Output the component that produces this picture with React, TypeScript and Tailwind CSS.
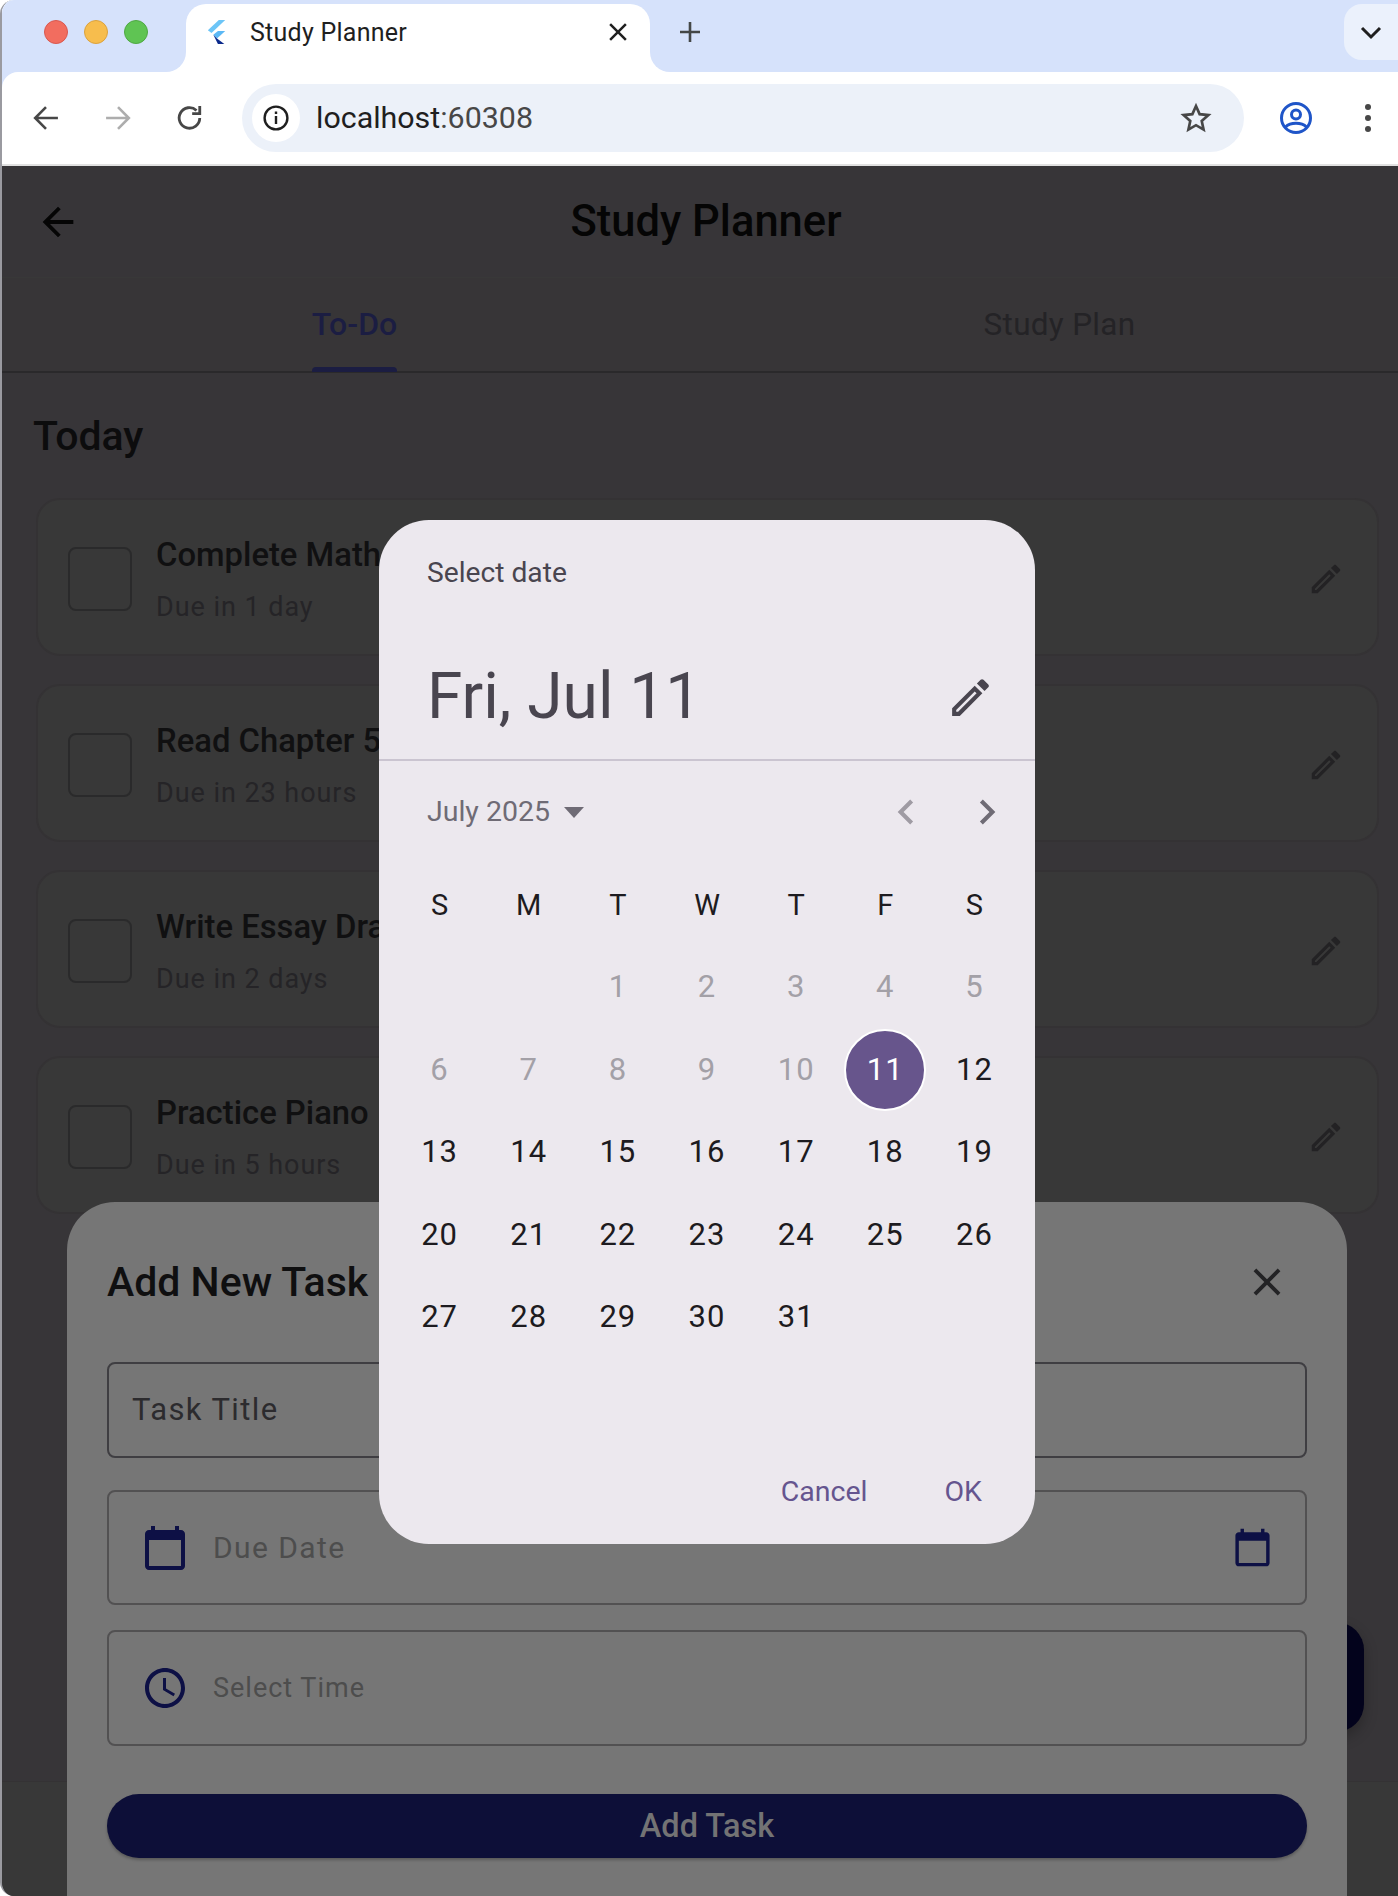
import React from 'react';

const PATHS = {
  back: 'M20 11H7.83l5.59-5.59L12 4l-8 8 8 8 1.41-1.41L7.83 13H20v-2z',
  edit: 'M14.06 9.02l.92.92L5.92 19H5v-.92l9.06-9.06M17.66 3c-.25 0-.51.1-.7.29l-1.83 1.83 3.75 3.75 1.83-1.83c.39-.39.39-1.02 0-1.41l-2.34-2.34c-.2-.2-.45-.29-.71-.29zm-3.6 3.19L3 17.25V21h3.75L17.81 9.94l-3.75-3.75z',
  close: 'M19 6.41L17.59 5 12 10.59 6.41 5 5 6.41 10.59 12 5 17.59 6.41 19 12 13.41 17.59 19 19 17.59 13.41 12z',
  calendar: 'M20 3h-1V1h-2v2H7V1H5v2H4c-1.1 0-2 .9-2 2v16c0 1.1.9 2 2 2h16c1.1 0 2-.9 2-2V5c0-1.1-.9-2-2-2zm0 18H4V8h16v13z',
  clock: 'M11.99 2C6.47 2 2 6.48 2 12s4.47 10 9.99 10C17.52 22 22 17.52 22 12S17.52 2 11.99 2zM12 20c-4.42 0-8-3.58-8-8s3.58-8 8-8 8 3.58 8 8-3.58 8-8 8zm.5-13H11v6l5.25 3.15.75-1.23-4.5-2.67z',
  prev: 'M15.41 7.41L14 6l-6 6 6 6 1.41-1.41L10.83 12z',
  next: 'M10 6L8.59 7.41 13.17 12l-4.58 4.59L10 18l6-6z',
};

const Icon = ({ d, className }: { d: string; className: string }) => (
  <svg viewBox="0 0 24 24" fill="currentColor" className={className}>
    <path d={d} />
  </svg>
);

const tasks = [
  { title: 'Complete Math', due: 'Due in 1 day' },
  { title: 'Read Chapter 5', due: 'Due in 23 hours' },
  { title: 'Write Essay Dra', due: 'Due in 2 days' },
  { title: 'Practice Piano', due: 'Due in 5 hours' },
];

const weekDays = ['S', 'M', 'T', 'W', 'T', 'F', 'S'];

const BrowserChrome = () => (
  <div className="bg-[#d6e2fb] font-['Roboto',sans-serif]">
    <div className="flex h-[72px] bg-white">
      <div className="flex w-[184px] items-center gap-[16px] rounded-br-[20px] bg-[#d6e2fb] pb-[8px] pl-[42px]">
        <span className="size-[24px] rounded-full border border-[#d9584f] bg-[#f26d5f]" />
        <span className="size-[24px] rounded-full border border-[#dba23e] bg-[#f7bd4d]" />
        <span className="size-[24px] rounded-full border border-[#4fa843] bg-[#5fc453]" />
      </div>
      <div className="bg-[#d6e2fb] pt-[4px]">
        <div className="flex h-[68px] w-[464px] items-center rounded-t-[20px] bg-white pb-[12px] pl-[20px]">
          <svg viewBox="0 0 24 28" className="h-[26px] w-[22px]">
            <polygon points="14,1 21,1 6,15 2,12" fill="#6cc5f7" />
            <polygon points="13,13 21,13 12,21 8,17" fill="#5bb8f5" />
            <polygon points="8,17 12,21 20,27 13,27" fill="#0b2a8c" />
          </svg>
          <span className="ml-[22px] text-[25px] leading-none tracking-[0.25px] text-[#1f1f1f]">Study Planner</span>
          <Icon d={PATHS.close} className="ml-auto mr-[17px] size-[30px] text-[#1f1f1f]" />
        </div>
      </div>
      <div className="flex flex-1 justify-between rounded-bl-[20px] bg-[#d6e2fb] pl-[28px]">
        <svg viewBox="0 0 24 24" className="mt-[20px] size-[24px] text-[#444746]" fill="none" stroke="currentColor" strokeWidth="2.6">
          <path d="M12 2v20M2 12h20" />
        </svg>
        <div className="mt-[4px] flex h-[56px] w-[54px] items-center justify-center rounded-l-[18px] bg-[#ebf1fc]">
          <svg viewBox="0 0 24 24" className="size-[24px] text-[#1f1f1f]" fill="none" stroke="currentColor" strokeWidth="3">
            <path d="M3 8l9 9 9-9" />
          </svg>
        </div>
      </div>
    </div>
    <div className="flex h-[92px] items-center rounded-tl-[16px] bg-white">
      <svg viewBox="0 0 24 24" className="ml-[31px] size-[26px] text-[#474747]" fill="none" stroke="currentColor" strokeWidth="2.4">
        <path d="M23 12H2M12 2L2 12l10 10" />
      </svg>
      <svg viewBox="0 0 24 24" className="ml-[46px] size-[26px] text-[#adadad]" fill="none" stroke="currentColor" strokeWidth="2.4">
        <path d="M1 12h21M12 2l10 10-10 10" />
      </svg>
      <svg viewBox="0 0 24 24" className="ml-[46px] size-[26px] text-[#474747]" fill="none" stroke="currentColor" strokeWidth="2.6">
        <path d="M21 12a9.5 9.5 0 1 1-3-7M21 1v7h-7" />
      </svg>
      <div className="ml-[39px] flex h-[68px] w-[1002px] items-center rounded-full bg-[#ecf1f9] pl-[10px] pr-[32px]">
        <div className="flex size-[48px] items-center justify-center rounded-full bg-white">
          <svg viewBox="0 0 26 26" className="size-[26px] text-[#1f1f1f]" fill="none" stroke="currentColor" strokeWidth="2.4">
            <circle cx="13" cy="13" r="11.4" />
            <path d="M13 11v8M13 6.5v2.4" />
          </svg>
        </div>
        <span className="ml-[16px] text-[30.4px] leading-none text-[#1f1f1f]">
          localhost<span className="text-[#474747]">:60308</span>
        </span>
        <svg viewBox="0 0 24 24" className="ml-auto size-[32px] text-[#474747]" fill="none" stroke="currentColor" strokeWidth="2">
          <path d="M12 3l2.7 6.1 6.6.7-5 4.4 1.4 6.5L12 17.4l-5.7 3.3 1.4-6.5-5-4.4 6.6-.7z" />
        </svg>
      </div>
      <svg viewBox="0 0 32 32" className="ml-[36px] size-[32px] text-[#1f55c8]" fill="none" stroke="currentColor" strokeWidth="3">
        <circle cx="16" cy="16" r="14.5" />
        <circle cx="16" cy="12.5" r="4.5" />
        <path d="M5.5 25c5-5 16-5 21 0" />
      </svg>
      <div className="ml-[53px] flex flex-col gap-[5px]">
        <span className="size-[6px] rounded-full bg-[#474747]" />
        <span className="size-[6px] rounded-full bg-[#474747]" />
        <span className="size-[6px] rounded-full bg-[#474747]" />
      </div>
    </div>
    <div className="h-[2px] bg-[#e1e1e1]" />
  </div>
);

const TaskCard = ({ title, due }: { title: string; due: string }) => (
  <div className="flex h-[158px] items-center rounded-[24px] border-2 border-[#343234] bg-[#383838] pl-[30px] pr-[32px]">
    <div className="mt-[4px] size-[64px] rounded-[8px] border-2 border-[#2a2a2b]" />
    <div className="ml-[24px] flex flex-col pt-[5px]">
      <span className="text-[32.8px] font-medium leading-[46px] text-[#101011]">{title}</span>
      <span className="mt-[9px] text-[27px] leading-[40px] tracking-[0.95px] text-[#252427]">{due}</span>
    </div>
    <Icon d={PATHS.edit} className="ml-auto mt-[4px] size-[38px] text-[#232224]" />
  </div>
);

const DatePicker = () => (
  <div className="absolute left-[377px] top-[354px] z-20 flex h-[1024px] w-[656px] flex-col rounded-[50px] bg-[#ece8ee]">
    <div className="mt-[38px] pl-[48px] text-[28.2px] leading-[30px] text-[#49454f]">Select date</div>
    <div className="mt-[59px] flex h-[100px] items-center pl-[48px] pr-[40px]">
      <span className="text-[64px] leading-none text-[#49454f]">Fri, Jul 11</span>
      <Icon d={PATHS.edit} className="ml-auto size-[49px] text-[#49454f]" />
    </div>
    <div className="mt-[12px] h-[2px] bg-[#cac4d0]" />
    <div className="mt-[21px] flex h-[60px] items-center pl-[48px] pr-[23px]">
      <span className="text-[28.5px] leading-none text-[#6f6b75]">July 2025</span>
      <svg viewBox="0 0 20 11" className="ml-[14px] h-[11px] w-[20px] text-[#6f6b75]" fill="currentColor">
        <path d="M0 0h20L10 11z" />
      </svg>
      <Icon d={PATHS.prev} className="ml-auto size-[50px] text-[#9f9ba3]" />
      <Icon d={PATHS.next} className="ml-[31px] size-[50px] text-[#6f6b75]" />
    </div>
    <div className="mt-[34px] grid h-[60px] grid-cols-7 px-[16px]">
      {weekDays.map((d, i) => (
        <div key={i} className="flex items-center justify-center text-[29px] text-[#1d1b20]">
          {d}
        </div>
      ))}
    </div>
    <div className="mt-[10px] grid auto-rows-[82.5px] grid-cols-7 px-[16px]">
      <div />
      <div />
      {Array.from({ length: 31 }, (_, i) => i + 1).map((n) => (
        <div key={n} className="flex items-center justify-center">
          {n === 11 ? (
            <div className="flex size-[82px] items-center justify-center rounded-full border-2 border-white bg-[#67558c] text-[31px] tracking-[1px] text-white">
              {n}
            </div>
          ) : (
            <span className={n < 11 ? 'text-[31px] tracking-[1px] text-[#a3a0a7]' : 'text-[31px] tracking-[1px] text-[#1d1b20]'}>
              {n}
            </span>
          )}
        </div>
      ))}
    </div>
    <div className="mb-[32px] mt-auto flex h-[40px] items-center justify-end gap-[77px] pr-[53px] text-[28.5px] leading-none text-[#65558f]">
      <span>Cancel</span>
      <span>OK</span>
    </div>
  </div>
);

const AddTaskSheet = () => (
  <div className="absolute bottom-0 left-[65px] right-[51px] top-[1036px] z-10 flex flex-col rounded-t-[48px] bg-[#767676] px-[40px]">
    <div className="mt-[50px] flex h-[60px] items-center justify-between">
      <span className="text-[41px] font-medium leading-none text-[#0f0f10]">Add New Task</span>
      <Icon d={PATHS.close} className="mr-[17px] size-[46px] text-[#232325]" />
    </div>
    <div className="mt-[50px] flex h-[96px] items-center rounded-[8px] border-2 border-[#3f3e42] pl-[23px] text-[31px] tracking-[1.4px] text-[#2c2b2e]">
      Task Title
    </div>
    <div className="mt-[32px] flex h-[115px] items-center rounded-[8px] border-2 border-[#525152] pl-[32px] pr-[32px] text-[30px] tracking-[1.4px] text-[#4d4d4d]">
      <Icon d={PATHS.calendar} className="size-[48px] text-[#0d1045]" />
      <span className="ml-[24px]">Due Date</span>
      <Icon d={PATHS.calendar} className="ml-auto size-[41px] text-[#0d1045]" />
    </div>
    <div className="mt-[25px] flex h-[116px] items-center rounded-[8px] border-2 border-[#525152] pl-[32px] text-[27px] tracking-[1px] text-[#4d4d4d]">
      <Icon d={PATHS.clock} className="size-[48px] text-[#0d1045]" />
      <span className="ml-[24px]">Select Time</span>
    </div>
    <div className="mt-[48px] flex h-[64px] items-center justify-center rounded-full bg-[#0d0f38] text-[32.5px] font-medium text-[#737374] shadow-[0_2px_3px_rgba(0,0,0,0.25)]">
      Add Task
    </div>
  </div>
);

export default function App() {
  return (
    <div className="h-[1896px] w-[1398px] overflow-hidden rounded-l-[14px] border-l-2 border-[#9a9aa0] bg-white font-['Roboto',sans-serif]">
      <BrowserChrome />
      <div className="relative flex h-[1730px] flex-col overflow-hidden bg-[#373538]">
        <div className="flex h-[112px] items-center justify-center border-b border-[#383838] pl-[12px]">
          <Icon d={PATHS.back} className="absolute left-[33px] top-[33px] size-[46px] text-[#050505]" />
          <span className="text-[43.5px] font-medium leading-none text-[#050505]">Study Planner</span>
        </div>
        <div className="flex h-[95px] border-b-2 border-[#2a292b] bg-[#373537]">
          <div className="flex flex-1 justify-center pl-[14px]">
            <div className="relative h-full pt-[30px]">
              <span className="block text-[32px] font-medium leading-none text-[#1b1d42]">To-Do</span>
              <div className="absolute bottom-[-1px] left-0 right-0 h-[5px] rounded-t-[4px] bg-[#1b1d42]" />
            </div>
          </div>
          <div className="flex flex-1 justify-center pl-[28px] pt-[31px]">
            <span className="text-[31.5px] leading-none tracking-[0.3px] text-[#242326]">Study Plan</span>
          </div>
        </div>
        <div className="flex flex-1 flex-col pl-[31px] pr-[19px]">
          <h1 className="mt-[38px] text-[41px] font-medium leading-[50px] text-[#0c0c0d]">Today</h1>
          <div className="ml-[3px] mt-[37px] flex flex-col gap-[28px]">
            {tasks.map((t) => (
              <TaskCard key={t.title} title={t.title} due={t.due} />
            ))}
          </div>
        </div>
        <div className="h-[115px] border-t border-[#343234] bg-[#383838]" />
        <div className="absolute left-[1235px] top-[1456px] h-[110px] w-[127px] rounded-[28px] bg-[#03031c] shadow-[0_6px_14px_rgba(0,0,0,0.25)]" />
        <AddTaskSheet />
        <DatePicker />
      </div>
    </div>
  );
}
